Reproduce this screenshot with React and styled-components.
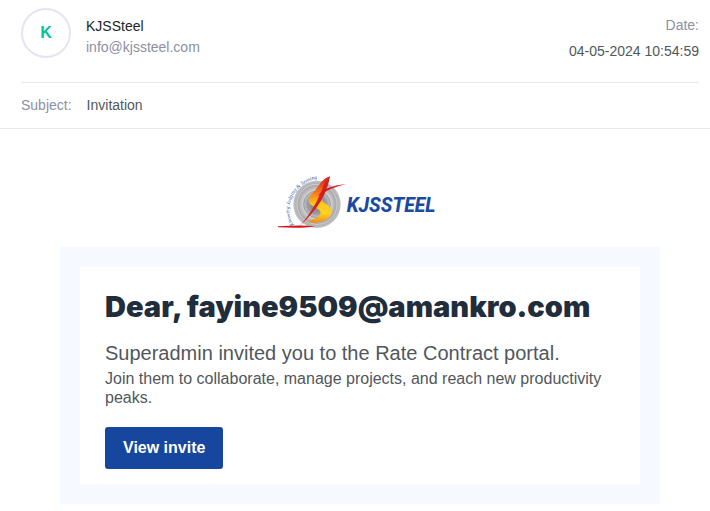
import React from "react";
import styled, { createGlobalStyle } from "styled-components";

const GlobalStyle = createGlobalStyle`
  * {
    box-sizing: border-box;
  }

  body {
    margin: 0;
    background: #ffffff;
    font-family: "Liberation Sans", Arial, sans-serif;
    font-size: 14px;
    color: #51575d;
  }
`;

const MailHeader = styled.header`
  padding: 8px 11px 0 21px;
  border-bottom: 1px solid #e8e7f3;
`;

const SenderRow = styled.div`
  display: flex;
  justify-content: space-between;
  padding-bottom: 18px;
  border-bottom: 1px solid #e8e7f3;
`;

const Sender = styled.div`
  display: flex;
  align-items: flex-start;
  gap: 15px;
`;

const Avatar = styled.div`
  display: flex;
  justify-content: center;
  align-items: center;
  width: 50px;
  height: 50px;
  border: 2px solid #e5e4f0;
  border-radius: 50%;
  font-size: 16px;
  font-weight: bold;
  color: #00c497;
`;

const SenderInfo = styled.div`
  display: flex;
  flex-direction: column;
  padding-top: 8px;
  line-height: 21px;
`;

const SenderName = styled.span`
  color: #20252b;
`;

const SenderMail = styled.a`
  color: #8c8fa5;
  text-decoration: none;
`;

const DateInfo = styled.div`
  display: flex;
  flex-direction: column;
  align-items: flex-end;
  padding-top: 4px;
  line-height: 26px;
`;

const Label = styled.span`
  color: #8c8fa5;
`;

const SubjectRow = styled.div`
  display: flex;
  gap: 15px;
  line-height: 45px;
`;

const MailBody = styled.main`
  display: flex;
  flex-direction: column;
  align-items: center;
  padding: 46px 10px 7px 20px;
`;

const LogoSvg = styled.svg`
  width: 164px;
  height: 56px;
  margin-bottom: 16px;
`;

const Panel = styled.section`
  width: 100%;
  max-width: 600px;
  padding: 20px;
  background: #f6f9ff;
`;

const Card = styled.div`
  padding: 20px 25px 15px;
  background: #ffffff;
`;

const Title = styled.h1`
  margin: 0 0 15px;
  font-family: Inter, "Arial Black", sans-serif;
  font-size: 29px;
  font-weight: 900;
  line-height: 39px;
  color: #1f2d3d;
`;

const Lead = styled.p`
  margin: 0 0 4px;
  font-size: 20px;
  line-height: 24px;
`;

const Text = styled.p`
  margin: 0 0 20px;
  font-size: 16px;
  line-height: 19px;
`;

const InviteButton = styled.button`
  display: block;
  height: 42px;
  padding: 0 18px;
  border: none;
  border-radius: 3px;
  background: #17469e;
  color: #ffffff;
  font-family: inherit;
  font-size: 16px;
  font-weight: bold;
  cursor: pointer;
`;

const Logo = () => (
  <LogoSvg viewBox="24 30 492 168" role="img" aria-label="KJSSTEEL">
    <defs>
      <radialGradient id="disc">
        <stop offset="0" stopColor="#77777c" />
        <stop offset="0.4" stopColor="#9c9ca0" />
        <stop offset="0.6" stopColor="#cfcfd1" />
        <stop offset="0.8" stopColor="#a9a9ac" />
        <stop offset="1" stopColor="#c2c2c4" />
      </radialGradient>
      <linearGradient id="flame" x1="0" y1="0" x2="0" y2="1">
        <stop offset="0" stopColor="#d3181f" />
        <stop offset="0.35" stopColor="#f4781c" />
        <stop offset="0.6" stopColor="#ffc81e" />
        <stop offset="0.8" stopColor="#ffd21e" />
        <stop offset="1" stopColor="#f4891c" />
      </linearGradient>
      <path id="motto" d="M72 180 C34 126 76 38 164 40" />
    </defs>
    <circle cx="141" cy="118" r="71" fill="url(#disc)" />
    <circle cx="141" cy="118" r="60" fill="none" stroke="#dededf" strokeWidth="2" />
    <circle cx="141" cy="118" r="40" fill="none" stroke="#8a8a8e" strokeWidth="2" />
    <text fontFamily="Liberation Serif, serif" fontSize="16" fontStyle="italic" fill="#2d5cab">
      <textPath href="#motto">Knowing Judging &amp; Sensing</textPath>
    </text>
    <path
      d="M180 34 C156 42 148 60 136 76 C122 88 112 100 118 114 C126 126 150 130 152 142 C152 154 136 162 110 170 C146 180 184 164 184 138 C184 118 152 112 150 98 C152 80 170 66 180 34Z"
      fill="url(#flame)"
    />
    <path d="M180 34 C172 86 142 136 88 184 C120 148 146 106 162 56Z" fill="#d3221d" />
    <path d="M228 57 C200 64 172 74 144 94 C156 72 186 62 228 57Z" fill="#d3181f" />
    <path d="M24 184 C64 182 102 180 136 184 C102 190 64 189 24 187Z" fill="#d3181f" />
    <text
      x="230"
      y="142"
      fontFamily="Roboto, Liberation Sans, sans-serif"
      fontSize="58"
      fontWeight="800"
      fontStyle="italic"
      fill="#1b4aa3"
    >
      KJSSTEEL
    </text>
  </LogoSvg>
);

const App = () => {
  return (
    <>
      <GlobalStyle />
      <MailHeader>
        <SenderRow>
          <Sender>
            <Avatar>K</Avatar>
            <SenderInfo>
              <SenderName>KJSSteel</SenderName>
              <SenderMail href="mailto:info@kjssteel.com">info@kjssteel.com</SenderMail>
            </SenderInfo>
          </Sender>
          <DateInfo>
            <Label>Date:</Label>
            <span>04-05-2024 10:54:59</span>
          </DateInfo>
        </SenderRow>
        <SubjectRow>
          <Label>Subject:</Label>
          <span>Invitation</span>
        </SubjectRow>
      </MailHeader>

      <MailBody>
        <Logo />
        <Panel>
          <Card>
            <Title>Dear, fayine9509@amankro.com</Title>
            <Lead>Superadmin invited you to the Rate Contract portal.</Lead>
            <Text>
              Join them to collaborate, manage projects, and reach new productivity peaks.
            </Text>
            <InviteButton type="button">View invite</InviteButton>
          </Card>
        </Panel>
      </MailBody>
    </>
  );
};

export default App;
